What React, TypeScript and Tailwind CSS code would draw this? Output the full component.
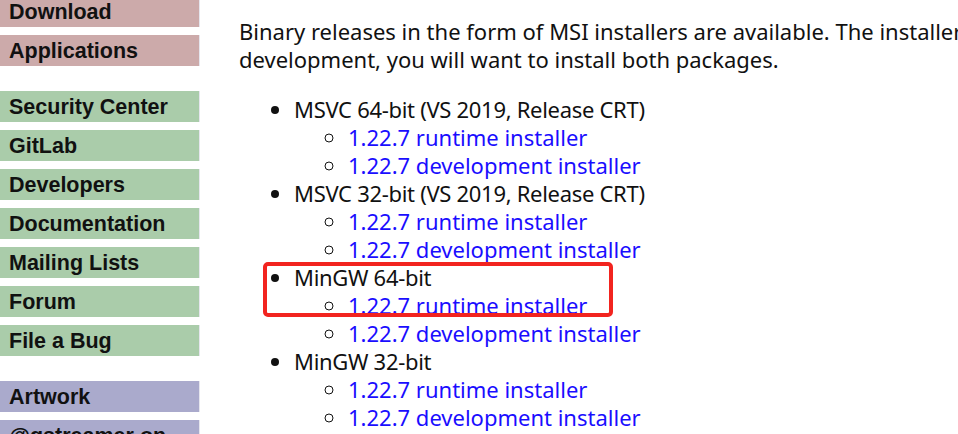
const groups: { color: string; items: string[] }[] = [
  { color: "bg-[#ccaaaa]", items: ["Download", "Applications"] },
  {
    color: "bg-[#aaccaa]",
    items: [
      "Security Center",
      "GitLab",
      "Developers",
      "Documentation",
      "Mailing Lists",
      "Forum",
      "File a Bug",
    ],
  },
  { color: "bg-[#aaaacc]", items: ["Artwork", "@gstreamer on"] },
];

const builds = [
  "MSVC 64-bit (VS 2019, Release CRT)",
  "MSVC 32-bit (VS 2019, Release CRT)",
  "MinGW 64-bit",
  "MinGW 32-bit",
];

function Sidebar() {
  return (
    <div className="-mt-[4px] flex w-[200px] shrink-0 flex-col gap-[25px]">
      {groups.map((g) => (
        <div key={g.items[0]} className="flex flex-col gap-2">
          {g.items.map((item) => (
            <a
              key={item}
              href="#"
              className={`${g.color} block h-[31px] whitespace-nowrap border-r border-[#e6e6ee] pl-[9px] text-[21.5px] font-bold leading-[32px] text-[#111]`}
              style={{ fontFamily: '"Liberation Sans", Arial, sans-serif' }}
            >
              {item}
            </a>
          ))}
        </div>
      ))}
    </div>
  );
}

export default function App() {
  return (
    <div className="flex h-[434px] w-[958px] gap-[39px] overflow-hidden bg-white">
      <Sidebar />
      <div
        className="relative min-w-0 flex-1 pt-[17px] text-[22px] leading-[28px] text-[#111]"
        style={{ fontFamily: '"Noto Sans", "Open Sans", sans-serif' }}
      >
        <p className="whitespace-nowrap">
          Binary releases in the form of MSI installers are available. The installer
          <br />
          development, you will want to install both packages.
        </p>
        <ul className="mt-[22px] list-disc pl-[55px]">
          {builds.map((b) => (
            <li key={b} className="whitespace-nowrap">
              <span className="tracking-[-0.3px]">{b}</span>
              <ul className="list-[circle] pl-[54px]">
                <li>
                  <a href="#" className="text-[#1a0dff]">
                    1.22.7 runtime installer
                  </a>
                </li>
                <li>
                  <a href="#" className="text-[#1a0dff]">
                    1.22.7 development installer
                  </a>
                </li>
              </ul>
            </li>
          ))}
        </ul>
        <div className="pointer-events-none absolute left-[24px] top-[262px] h-[55px] w-[350px] rounded-[5px] border-[4px] border-[#f2241f]" />
      </div>
    </div>
  );
}
